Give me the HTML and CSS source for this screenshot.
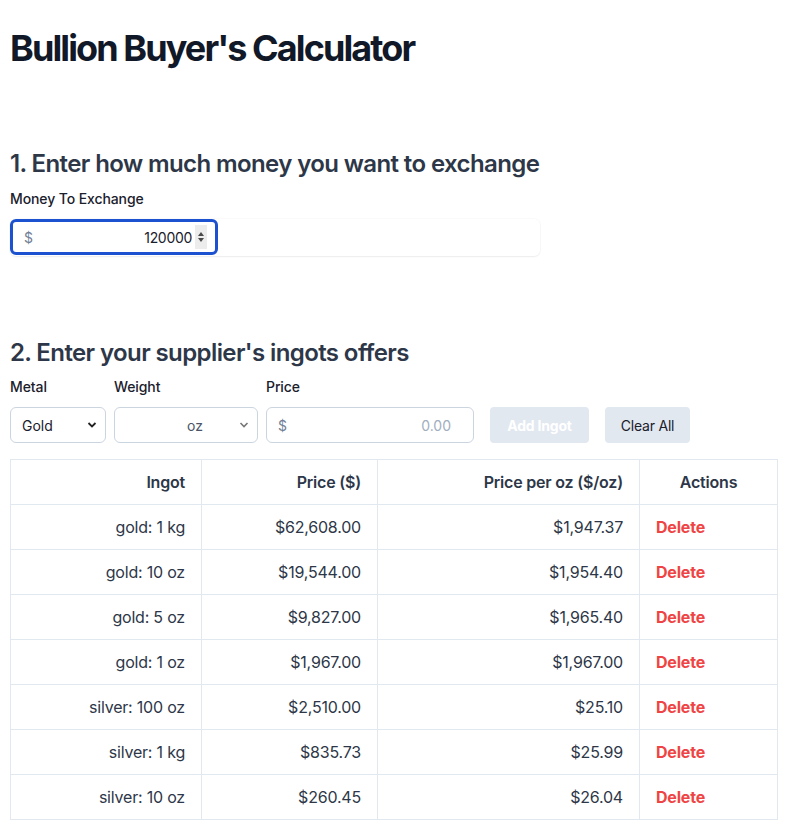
FILE: index.html
```html
<!DOCTYPE html>
<html lang="en">
<head>
<meta charset="utf-8">
<title>Bullion Buyer's Calculator</title>
<link rel="stylesheet" href="styles.css">
</head>
<body>
<main class="page">
  <h1 class="title">Bullion Buyer's Calculator</h1>

  <section class="section section-money">
    <h2 class="heading">1. Enter how much money you want to exchange</h2>
    <label class="label">Money To Exchange</label>
    <div class="money-wrap">
      <div class="money-input">
        <span class="prefix">$</span>
        <span class="money-value">120000</span>
        <span class="spinner">
          <svg width="8" height="14" viewBox="0 0 8 14"><path d="M4 2 L7 6 L1 6 Z" fill="#4a4a4a"/><path d="M4 12 L7 8 L1 8 Z" fill="#4a4a4a"/></svg>
        </span>
      </div>
    </div>
  </section>

  <section class="section section-ingots">
    <h2 class="heading">2. Enter your supplier's ingots offers</h2>
    <div class="form-row">
      <div class="field">
        <label class="label">Metal</label>
        <div class="control select metal">
          <span class="sel-text">Gold</span>
          <svg class="chev" width="10" height="8" viewBox="0 0 10 8"><path d="M1.5 2 L5 5.5 L8.5 2" fill="none" stroke="#222" stroke-width="1.8"/></svg>
        </div>
      </div>
      <div class="field">
        <label class="label">Weight</label>
        <div class="control select weight">
          <span class="sel-text unit">oz</span>
          <svg class="chev" width="10" height="8" viewBox="0 0 10 8"><path d="M1.5 2 L5 5.5 L8.5 2" fill="none" stroke="#777" stroke-width="1.6"/></svg>
        </div>
      </div>
      <div class="field">
        <label class="label">Price</label>
        <div class="control price">
          <span class="prefix">$</span>
          <span class="placeholder">0.00</span>
        </div>
      </div>
      <button class="btn btn-add" disabled>Add Ingot</button>
      <button class="btn btn-clear">Clear All</button>
    </div>

    <table class="ingots">
      <colgroup>
        <col class="c1"><col class="c2"><col class="c3"><col class="c4">
      </colgroup>
      <thead>
        <tr><th>Ingot</th><th>Price ($)</th><th>Price per oz ($/oz)</th><th class="center">Actions</th></tr>
      </thead>
      <tbody>
        <tr><td>gold: 1 kg</td><td>$62,608.00</td><td>$1,947.37</td><td class="act"><a class="del">Delete</a></td></tr>
        <tr><td>gold: 10 oz</td><td>$19,544.00</td><td>$1,954.40</td><td class="act"><a class="del">Delete</a></td></tr>
        <tr><td>gold: 5 oz</td><td>$9,827.00</td><td>$1,965.40</td><td class="act"><a class="del">Delete</a></td></tr>
        <tr><td>gold: 1 oz</td><td>$1,967.00</td><td>$1,967.00</td><td class="act"><a class="del">Delete</a></td></tr>
        <tr><td>silver: 100 oz</td><td>$2,510.00</td><td>$25.10</td><td class="act"><a class="del">Delete</a></td></tr>
        <tr><td>silver: 1 kg</td><td>$835.73</td><td>$25.99</td><td class="act"><a class="del">Delete</a></td></tr>
        <tr><td>silver: 10 oz</td><td>$260.45</td><td>$26.04</td><td class="act"><a class="del">Delete</a></td></tr>
      </tbody>
    </table>
  </section>
</main>
</body>
</html>
```

FILE: styles.css
```css
* { box-sizing: border-box; }
html, body { margin: 0; padding: 0; background: #fff; }
body {
  font-family: Inter, "Noto Sans", "Liberation Sans", sans-serif;
  color: #2d3748;
}
.page { padding: 0 10px; }

.title {
  margin: 28px 0 0;
  font-size: 36px;
  line-height: 40px;
  font-weight: 700;
  color: #111827;
  letter-spacing: -1.9px;
}

.heading {
  margin: 0 0 9px;
  font-size: 24px;
  line-height: 32px;
  font-weight: 600;
  color: #2d3748;
  letter-spacing: -0.6px;
}
.section-money { margin-top: 80px; }
.section-ingots { margin-top: 81px; }
.section-ingots .heading { margin-bottom: 8px; }

.label {
  display: block;
  font-size: 14px;
  line-height: 20px;
  font-weight: 500;
  color: #1a202c;
  letter-spacing: -0.1px;
}

.money-wrap {
  margin-top: 10px;
  width: 530px;
  height: 37px;
  border-radius: 6px;
  box-shadow: 0 1px 2px rgba(0,0,0,0.06), 0 0 0 1px rgba(0,0,0,0.02);
}
.money-input {
  width: 208px;
  height: 36px;
  border: 3px solid #1c52cf;
  border-radius: 6px;
  display: flex;
  align-items: center;
  padding: 0 8px 0 11px;
  font-size: 14px;
}
.prefix { color: #718096; font-size: 14px; }
.money-value { flex: 1; text-align: right; color: #1a202c; letter-spacing: -0.3px; }
.spinner {
  width: 12px;
  height: 24px;
  margin-left: 3px;
  background: #ececec;
  display: flex;
  align-items: center;
  justify-content: center;
}

.form-row {
  display: flex;
  align-items: flex-end;
  gap: 8px;
}
.field .label { margin-bottom: 10px; }
.control {
  height: 36px;
  border: 1px solid #cbd5e0;
  border-radius: 6px;
  display: flex;
  align-items: center;
  font-size: 14px;
  color: #1a202c;
  background: #fff;
}
.select { padding: 0 8px 0 11px; }
.metal { width: 96px; }
.weight { width: 144px; }
.sel-text { flex: 1; }
.unit { text-align: right; padding-right: 36px; color: #4a5568; }
.chev { flex: none; }
.price { width: 208px; padding: 0 22px 0 11px; }
.placeholder { flex: 1; text-align: right; color: #a0aec0; }

.btn {
  height: 36px;
  border: none;
  border-radius: 4px;
  background: #e2e8f0;
  font-family: inherit;
  font-size: 14px;
  padding: 0;
  white-space: nowrap;
  letter-spacing: -0.2px;
}
.btn-add {
  margin-left: 8px;
  width: 99px;
  color: #fff;
  font-weight: 700;
}
.btn-clear {
  margin-left: 8px;
  width: 85px;
  color: #1a202c;
  font-weight: 400;
}

.ingots {
  margin-top: 16px;
  width: 767px;
  border-collapse: collapse;
  table-layout: fixed;
  font-size: 16px;
  color: #2d3748;
  letter-spacing: -0.2px;
}
.c1 { width: 191px; }
.c2 { width: 176px; }
.c3 { width: 262px; }
.c4 { width: 138px; }
.ingots th, .ingots td {
  border: 1px solid #e2e8f0;
  height: 45px;
  padding: 0 16px;
  text-align: right;
  line-height: 20px;
}
.ingots th { font-weight: 600; }
.ingots th.center { text-align: center; }
.ingots td.act { text-align: left; }
.del {
  color: #ef4444;
  font-weight: 700;
  cursor: pointer;
}
```
